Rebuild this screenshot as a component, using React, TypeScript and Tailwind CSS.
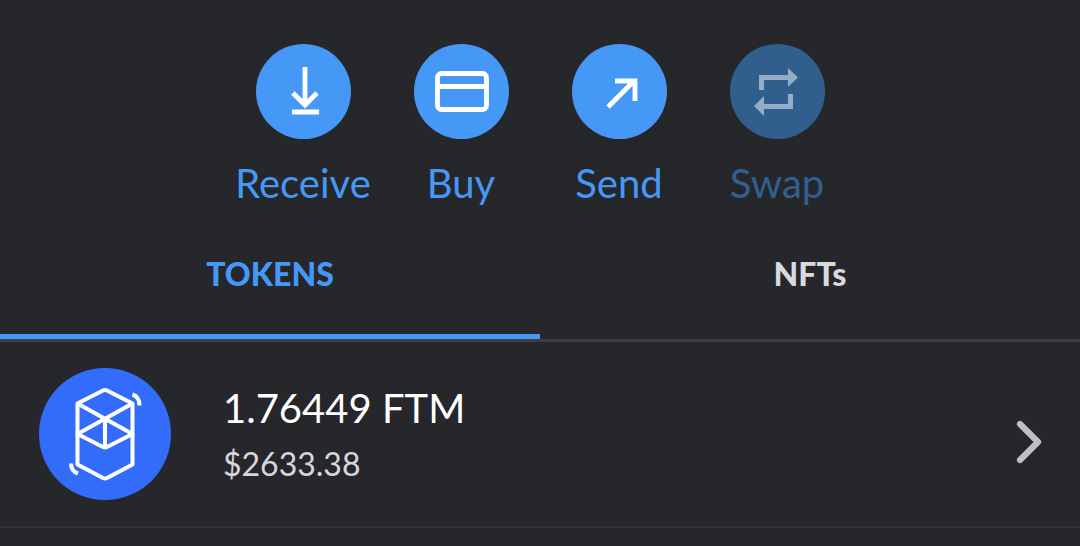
import { useState } from 'react';
import type { ReactNode } from 'react';
import clsx from 'clsx';

interface Action {
  label: string;
  icon: ReactNode;
  disabled?: boolean;
}

interface Token {
  symbol: string;
  balance: string;
  fiat: string;
}

const actions: Action[] = [
  {
    label: 'Receive',
    icon: <path d="M49 23v38M37 49l12 12 12-12M36 68h27" />,
  },
  {
    label: 'Buy',
    icon: (
      <>
        <rect x="23.500" y="29.500" width="49" height="36" rx="4" />
        <path d="M23.500 42.500h49" />
      </>
    ),
  },
  {
    label: 'Send',
    icon: <path d="M36 63l26-26M43 37h20v20" />,
  },
  {
    label: 'Swap',
    disabled: true,
    icon: (
      <path
        d="M29 46V31h29v-7l10 9.500-10 9.500v-7H34v10zM63 50v15H34v7l-10-10 10-10v8h24V50z"
        fill="currentColor"
        stroke="none"
      />
    ),
  },
];

const tabs = ['TOKENS', 'NFTs'];

const tokens: Token[] = [{ symbol: 'FTM', balance: '1.76449', fiat: '$2633.38' }];

function ActionButton({ label, icon, disabled }: Action) {
  return (
    <button
      type="button"
      disabled={disabled}
      className={clsx('flex w-[158px] flex-col items-center gap-5', disabled ? 'text-[#30608f]' : 'text-[#4698f6]')}
    >
      <span
        className={clsx(
          'size-[95px] rounded-full',
          disabled ? 'bg-[#305f8e] text-[#93adc7]' : 'bg-[#4698f6] text-white'
        )}
      >
        <svg viewBox="0 0 95 95" fill="none" stroke="currentColor" strokeWidth="4.8" aria-hidden="true">
          {icon}
        </svg>
      </span>
      <span className="text-[40px] leading-[48px]">{label}</span>
    </button>
  );
}

function FantomLogo() {
  return (
    <svg viewBox="0 0 132 132" className="size-[132px] shrink-0" fill="none" aria-hidden="true">
      <circle cx="66" cy="66" r="66" fill="#336bfb" />
      <g stroke="white" strokeWidth="4" strokeLinejoin="round">
        <path d="M64 22.500q2-1 4 0L93.500 35.500v61L68 110q-2 1-4 0L38.500 96.500v-61z" />
        <path d="M38.500 35.500L93.500 66 68 79q-2 1-4 0L38.500 66l55-30.500M66 51v29" />
        <path d="M93.500 26.500c4.500 1.500 7 5 7 11M32 95.500c0 5 2.500 8.500 7 10" />
      </g>
    </svg>
  );
}

function TokenRow({ symbol, balance, fiat }: Token) {
  return (
    <li className="border-b-2 border-[#333438]">
      <a href="#token" className="flex items-center py-[26px] pr-[38px] pl-[39px]">
        <FantomLogo />
        <span className="ml-[52px] flex flex-1 flex-col gap-3">
          <span className="text-[40px] leading-[48px] text-white">
            {balance} {symbol}
          </span>
          <span className="text-[32px] leading-[40px] text-[#d6d7dc]">{fiat}</span>
        </span>
        <svg viewBox="0 0 26 44" className="mt-4 h-11 w-[26px]" fill="none" aria-hidden="true">
          <path d="M4 4l18 18L4 40" stroke="#bdbfc5" strokeWidth="6.2" strokeLinecap="round" strokeLinejoin="round" />
        </svg>
      </a>
    </li>
  );
}

export default function App() {
  const [activeTab, setActiveTab] = useState('TOKENS');

  return (
    <main className="min-h-screen bg-[#26272b] font-['Lato',sans-serif]">
      <div className="flex justify-center pt-11">
        {actions.map((action) => (
          <ActionButton key={action.label} {...action} />
        ))}
      </div>

      <div role="tablist" className="mt-[47px] flex border-b-3 border-[#3d3e42]">
        {tabs.map((tab) => (
          <button
            key={tab}
            type="button"
            role="tab"
            aria-selected={activeTab === tab}
            onClick={() => setActiveTab(tab)}
            className={clsx(
              'flex-1 border-b-5 pb-10 text-[32px] leading-[40px] font-black',
              activeTab === tab ? 'border-[#4698f6] text-[#4698f6]' : 'border-transparent text-[#d9dadf]'
            )}
          >
            {tab}
          </button>
        ))}
      </div>

      {activeTab === 'TOKENS' && (
        <ul>
          {tokens.map((token) => (
            <TokenRow key={token.symbol} {...token} />
          ))}
        </ul>
      )}
    </main>
  );
}
